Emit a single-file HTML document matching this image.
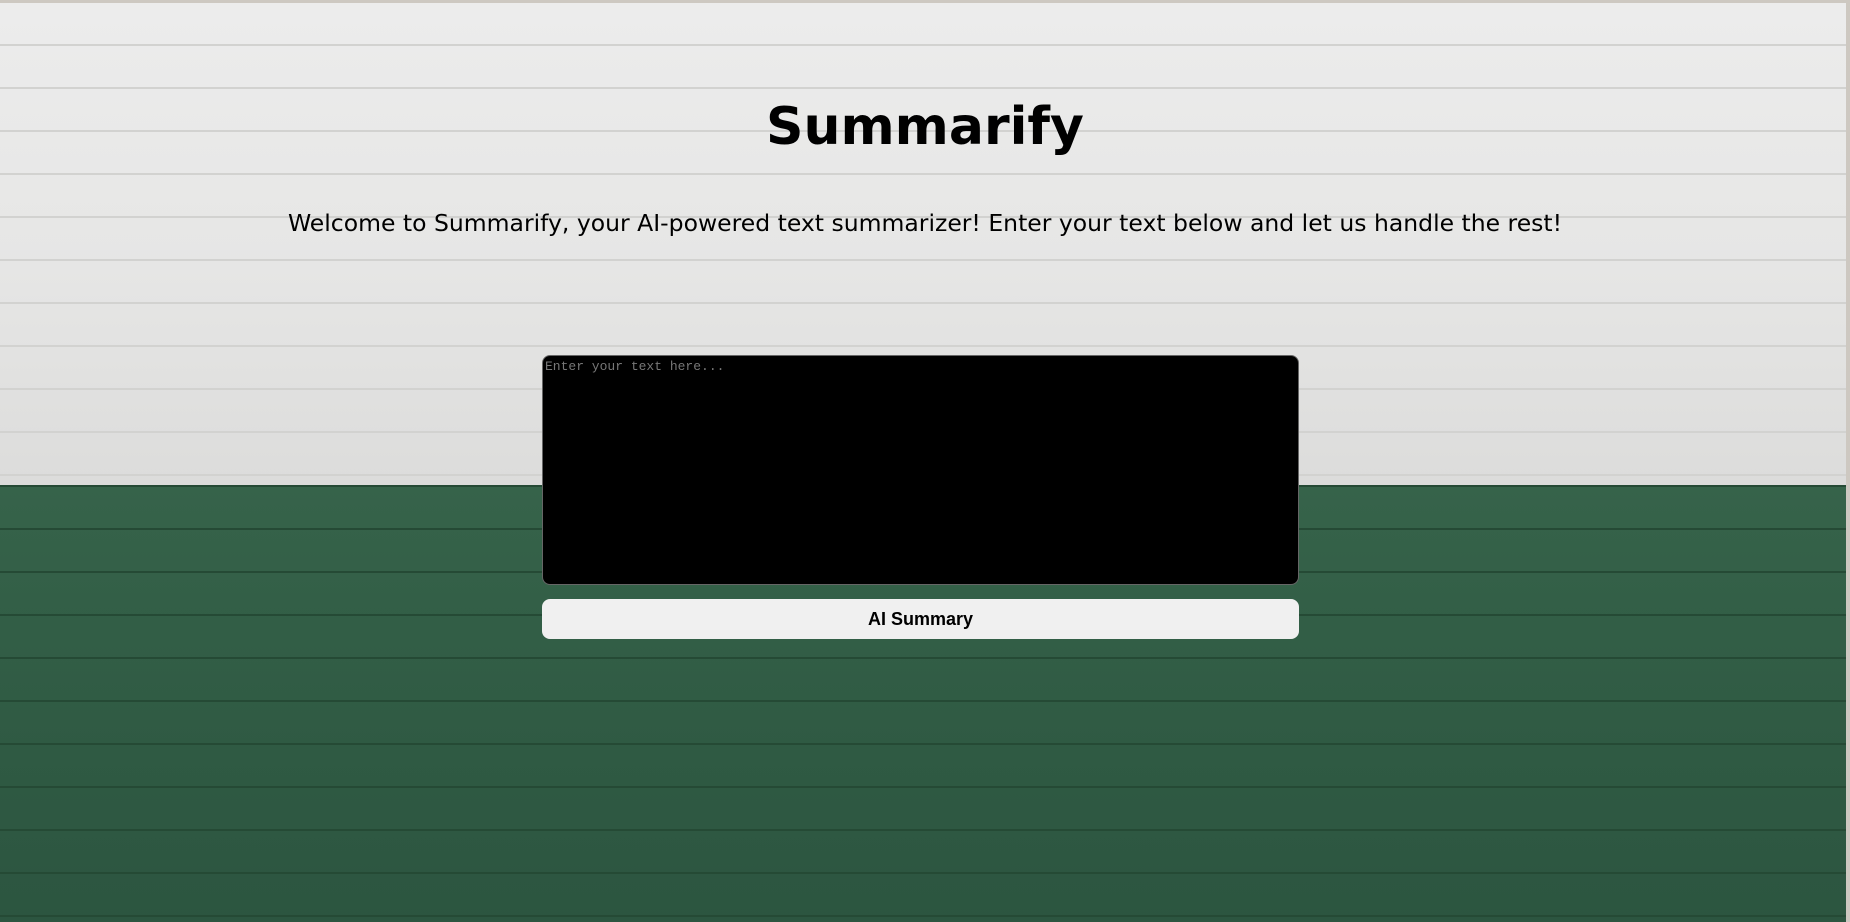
<!DOCTYPE html>
<html><head><style>
html,body{margin:0;padding:0;width:1850px;height:922px;overflow:hidden;background:#cdc8c1}
.bg{position:absolute;left:0;top:3px;width:1846px;height:919px;overflow:hidden}
.top{position:absolute;left:0;top:0;width:100%;height:482px;background:
repeating-linear-gradient(180deg,transparent 0 41px,#d2d2d0 41px 43px),
linear-gradient(180deg,#ececec 0%,#e6e6e5 55%,#dcdcdb 100%)}
.bot{position:absolute;left:0;top:482px;width:100%;height:440px;background:
repeating-linear-gradient(180deg,#254a35 0 2px,transparent 2px 43px),
linear-gradient(180deg,#36634a,#2f5a43 60%,#2c5540)}
h1{position:absolute;left:0;width:1850px;top:96px;margin:0;text-align:center;font:bold 52px/1.2 "Comic Sans MS","DejaVu Sans",sans-serif;color:#000}
p{position:absolute;left:0;width:1850px;top:209px;margin:0;text-align:center;font:23.5px/1.2 "Comic Sans MS","DejaVu Sans",sans-serif;color:#000}
.ta{position:absolute;left:542px;top:355px;width:757px;height:230px;background:#000;border:1px solid #666;border-radius:8px;font:13px "Liberation Mono",monospace;color:#777;box-sizing:border-box;padding:3px 2px}
.btn{position:absolute;left:542px;top:599px;width:757px;height:40px;background:#f0f0f0;border-radius:8px;text-align:center;font:bold 18px/40px "Liberation Sans",sans-serif;color:#000}
</style></head><body>
<div class="bg"><div class="top"></div><div class="bot"></div></div>
<h1>Summarify</h1>
<p>Welcome to Summarify, your AI-powered text summarizer! Enter your text below and let us handle the rest!</p>
<div class="ta">Enter your text here...</div>
<div class="btn">AI Summary</div>
</body></html>
